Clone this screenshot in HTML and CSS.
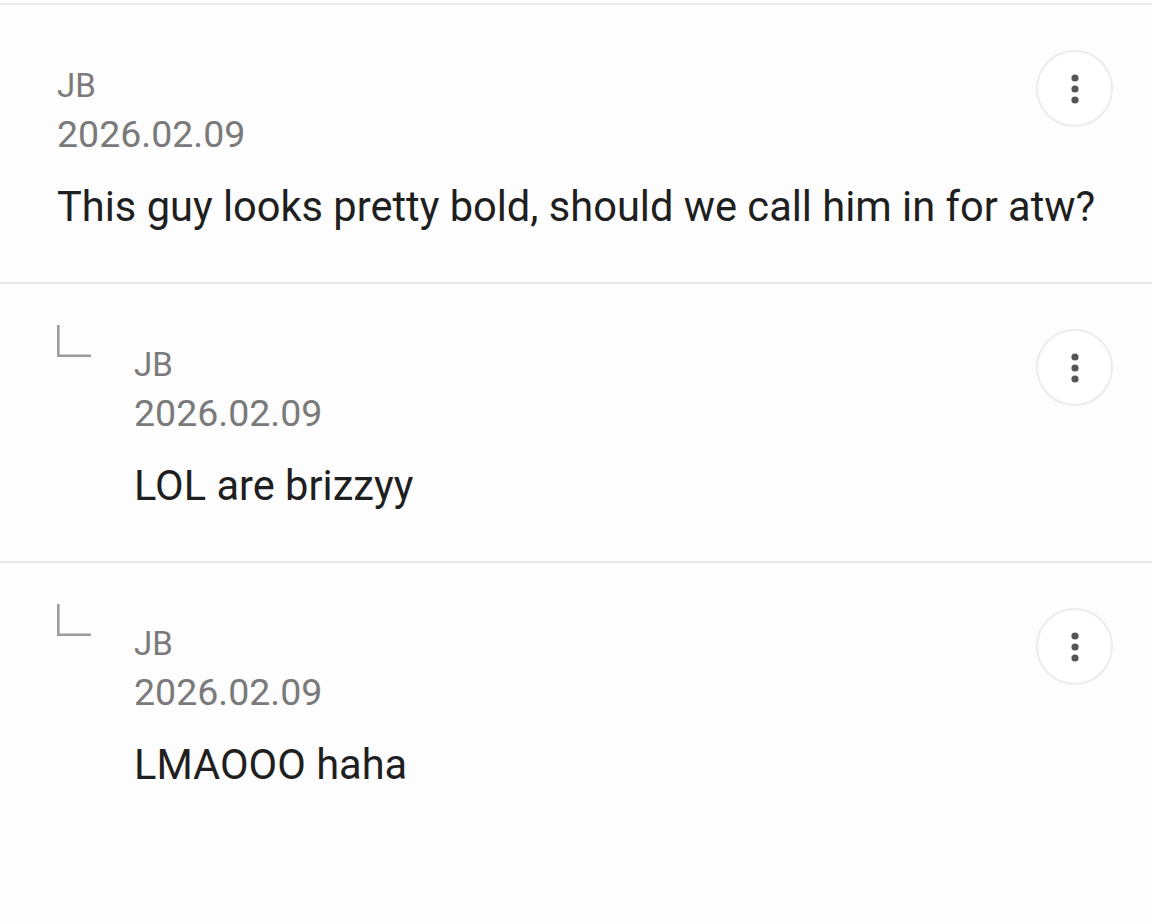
FILE: index.html
```html
<!DOCTYPE html>
<html>
<head>
<meta charset="utf-8">
<link rel="stylesheet" href="styles.css">
</head>
<body>
<div class="list">
  <div class="comment">
    <div class="main">
      <div class="body">
        <div class="author">JB</div>
        <div class="date">2026.02.09</div>
        <div class="text">This guy looks pretty bold, should we call him in for atw?</div>
      </div>
    </div>
    <button class="more" aria-label="More"><svg width="8" height="30" viewBox="0 0 8 30"><circle cx="4" cy="4" r="3.6"/><circle cx="4" cy="15" r="3.6"/><circle cx="4" cy="26" r="3.6"/></svg></button>
  </div>
  <div class="comment">
    <div class="main">
      <svg class="reply-icon" width="34" height="32" viewBox="0 0 34 32"><path d="M1.3 0 V30.7 H34" fill="none" stroke="#9c9c9c" stroke-width="2.6"/></svg>
      <div class="body">
        <div class="author">JB</div>
        <div class="date">2026.02.09</div>
        <div class="text">LOL are brizzyy</div>
      </div>
    </div>
    <button class="more" aria-label="More"><svg width="8" height="30" viewBox="0 0 8 30"><circle cx="4" cy="4" r="3.6"/><circle cx="4" cy="15" r="3.6"/><circle cx="4" cy="26" r="3.6"/></svg></button>
  </div>
  <div class="comment last">
    <div class="main">
      <svg class="reply-icon" width="34" height="32" viewBox="0 0 34 32"><path d="M1.3 0 V30.7 H34" fill="none" stroke="#9c9c9c" stroke-width="2.6"/></svg>
      <div class="body">
        <div class="author">JB</div>
        <div class="date">2026.02.09</div>
        <div class="text">LMAOOO haha</div>
      </div>
    </div>
    <button class="more" aria-label="More"><svg width="8" height="30" viewBox="0 0 8 30"><circle cx="4" cy="4" r="3.6"/><circle cx="4" cy="15" r="3.6"/><circle cx="4" cy="26" r="3.6"/></svg></button>
  </div>
</div>
</body>
</html>
```

FILE: styles.css
```css
html, body {
  margin: 0;
  padding: 0;
  background: #ffffff;
}
body {
  font-family: Roboto, "Noto Sans", sans-serif;
  padding-top: 3px;
}
.list {
  border-top: 2px solid #ebebeb;
}
.comment {
  display: flex;
  align-items: flex-start;
  height: 279px;
  box-sizing: border-box;
  padding: 40px 39px 0 57px;
  border-bottom: 2px solid #e8e8e8;
  background: #fdfdfd;
  position: relative;
}
.comment.last {
  border-bottom: none;
  height: 360px;
}
.main {
  display: flex;
  align-items: flex-start;
  flex: 1;
  min-width: 0;
}
.reply-icon {
  display: block;
  margin-top: 1px;
  width: 34px;
  margin-right: 43px;
  flex: none;
}
.body {
  padding-top: 21px;
}
.author {
  font-size: 33px;
  line-height: 40px;
  color: #7a7a7a;
}
.date {
  font-size: 37.5px;
  line-height: 44px;
  margin-top: 6px;
  color: #7a7a7a;
}
.text {
  font-size: 41.6px;
  line-height: 54px;
  margin-top: 24px;
  color: #1f1f1f;
  white-space: nowrap;
}
.more {
  position: absolute;
  top: 45px;
  right: 39px;
  width: 77px;
  height: 77px;
  border-radius: 50%;
  border: 2px solid #ececec;
  background: #ffffff;
  padding: 0;
  display: flex;
  align-items: center;
  justify-content: center;
}
.more svg {
  fill: #555555;
  display: block;
}
```
